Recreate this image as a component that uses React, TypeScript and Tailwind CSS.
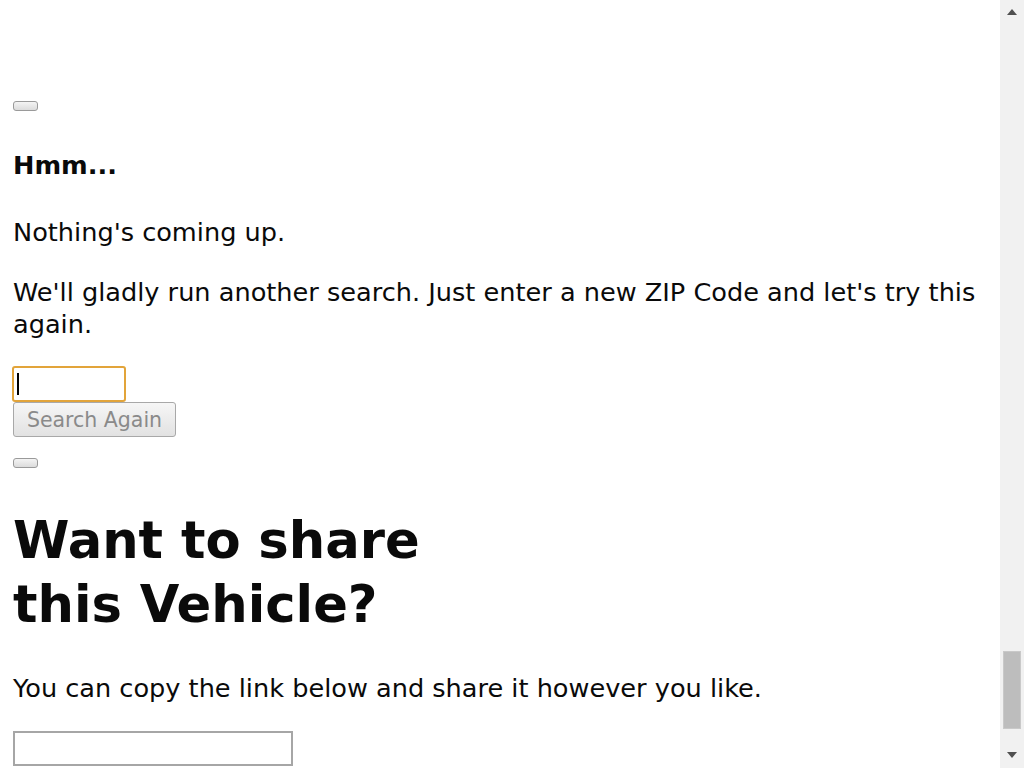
import React from "react";

const font = { fontFamily: '"DejaVu Sans", "Liberation Sans", sans-serif' };

function TinyButton() {
  return (
    <button
      type="button"
      aria-label="close"
      className="block w-[25px] h-[10px] rounded-[3px] border border-[#9a9a9a] bg-gradient-to-b from-[#f4f4f4] to-[#dcdcdc]"
    />
  );
}

function FakeScrollbar() {
  return (
    <div aria-hidden="true" className="fixed top-0 right-0 w-[24px] h-[768px] bg-[#f1f1f1]">
      <svg className="absolute left-[7px] top-[9px]" width="10" height="6" viewBox="0 0 10 6">
        <path d="M5 0 L10 6 L0 6 Z" fill="#505050" />
      </svg>
      <div className="absolute left-[3px] top-[651px] w-[18px] h-[78px] bg-[#bdbdbd] border border-[#c9c9c9]" />
      <svg className="absolute left-[7px] top-[752px]" width="10" height="6" viewBox="0 0 10 6">
        <path d="M0 0 L10 0 L5 6 Z" fill="#505050" />
      </svg>
    </div>
  );
}

export default function App() {
  return (
    <div style={font} className="text-[#0a0a0a] bg-white w-[1000px]">
      <div className="pl-[13px] pr-[13px] pt-[101px] pb-[239px]">
        <TinyButton />
        <h3 className="mt-[38px] text-[25.6px] leading-[32px] font-bold">Hmm...</h3>
        <p className="mt-[35px] text-[25.6px] leading-[32px]">Nothing's coming up.</p>
        <p className="mt-[28px] text-[25.6px] leading-[32px]">
          We'll gladly run another search. Just enter a new ZIP Code and let's try this again.
        </p>
        <form className="mt-[26px] flex flex-col items-start" onSubmit={(e) => e.preventDefault()}>
          <div className="relative -ml-[1px]">
            <input
              type="text"
              aria-label="ZIP Code"
              className="block w-[114px] h-[36px] rounded-[3px] border-2 border-[#e2a43a] bg-white outline-none"
            />
            <span className="absolute left-[5px] top-[7px] w-[2px] h-[22px] bg-black" />
          </div>
          <button
            type="button"
            disabled
            className="block w-[163px] h-[35px] rounded-[3px] border border-[#a8a8a8] bg-gradient-to-b from-[#f6f6f6] to-[#e2e2e2] text-[20.5px] leading-[33px] pt-[1px] text-[#8a8a8a]"
          >
            Search Again
          </button>
        </form>
        <div className="mt-[21px]">
          <TinyButton />
        </div>
        <h2 className="mt-[40px] max-w-[470px] text-[51.2px] leading-[64px] font-bold">
          Want to share this Vehicle?
        </h2>
        <p className="mt-[36px] text-[25.6px] leading-[32px]">
          You can copy the link below and share it however you like.
        </p>
        <input
          type="text"
          aria-label="Share link"
          readOnly
          className="mt-[27px] block w-[280px] h-[35px] border-2 border-[#a6a6a6] bg-white outline-none"
        />
      </div>
      <FakeScrollbar />
    </div>
  );
}
